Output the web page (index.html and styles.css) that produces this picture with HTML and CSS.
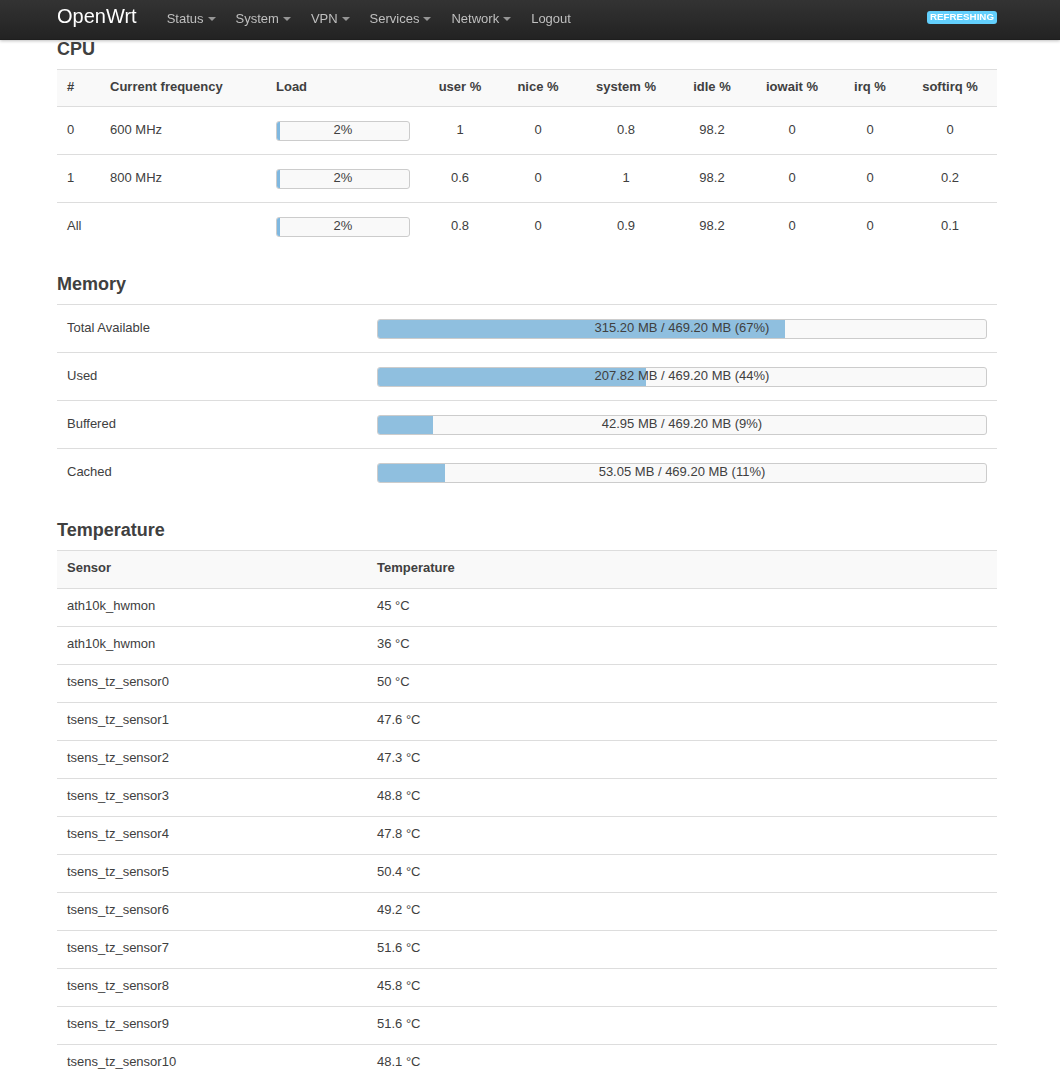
FILE: index.html
```html
<!DOCTYPE html>
<html lang="en">
<head>
<meta charset="utf-8">
<title>OpenWrt - Realtime Stats</title>
<link rel="stylesheet" href="styles.css">
</head>
<body>
<header class="topbar">
  <div class="topbar-inner">
    <a class="brand" href="#">OpenWrt</a>
    <ul class="nav">
      <li><a class="dropdown-toggle" href="#">Status</a></li>
      <li><a class="dropdown-toggle" href="#">System</a></li>
      <li><a class="dropdown-toggle" href="#">VPN</a></li>
      <li><a class="dropdown-toggle" href="#">Services</a></li>
      <li><a class="dropdown-toggle" href="#">Network</a></li>
      <li><a href="#">Logout</a></li>
    </ul>
    <span class="label notice">Refreshing</span>
  </div>
</header>

<main class="container">
  <section class="section first">
    <h3>CPU</h3>
    <table class="tbl cpu">
      <colgroup>
        <col class="c-num"><col class="c-freq"><col class="c-load"><col class="c-user"><col class="c-nice">
        <col class="c-sys"><col class="c-idle"><col class="c-iow"><col class="c-irq"><col class="c-soft">
      </colgroup>
      <thead>
        <tr><th>#</th><th>Current frequency</th><th>Load</th><th class="ctr">user %</th><th class="ctr">nice %</th><th class="ctr">system %</th><th class="ctr">idle %</th><th class="ctr">iowait %</th><th class="ctr">irq %</th><th class="ctr">softirq %</th></tr>
      </thead>
      <tbody>
        <tr><td>0</td><td>600 MHz</td><td class="barcell"><div class="pbar small"><div class="fill load" style="width:2%"></div><span class="ptext">2%</span></div></td><td class="ctr">1</td><td class="ctr">0</td><td class="ctr">0.8</td><td class="ctr">98.2</td><td class="ctr">0</td><td class="ctr">0</td><td class="ctr">0</td></tr>
        <tr><td>1</td><td>800 MHz</td><td class="barcell"><div class="pbar small"><div class="fill load" style="width:2%"></div><span class="ptext">2%</span></div></td><td class="ctr">0.6</td><td class="ctr">0</td><td class="ctr">1</td><td class="ctr">98.2</td><td class="ctr">0</td><td class="ctr">0</td><td class="ctr">0.2</td></tr>
        <tr><td>All</td><td></td><td class="barcell"><div class="pbar small"><div class="fill load" style="width:2%"></div><span class="ptext">2%</span></div></td><td class="ctr">0.8</td><td class="ctr">0</td><td class="ctr">0.9</td><td class="ctr">98.2</td><td class="ctr">0</td><td class="ctr">0</td><td class="ctr">0.1</td></tr>
      </tbody>
    </table>
  </section>

  <section class="section">
    <h3>Memory</h3>
    <table class="tbl mem">
      <colgroup><col class="c-label"><col class="c-value"></colgroup>
      <tbody>
        <tr><td>Total Available</td><td class="barcell"><div class="pbar"><div class="fill" style="width:67%"></div><span class="ptext">315.20 MB / 469.20 MB (67%)</span></div></td></tr>
        <tr><td>Used</td><td class="barcell"><div class="pbar"><div class="fill" style="width:44%"></div><span class="ptext">207.82 MB / 469.20 MB (44%)</span></div></td></tr>
        <tr><td>Buffered</td><td class="barcell"><div class="pbar"><div class="fill" style="width:9%"></div><span class="ptext">42.95 MB / 469.20 MB (9%)</span></div></td></tr>
        <tr><td>Cached</td><td class="barcell"><div class="pbar"><div class="fill" style="width:11%"></div><span class="ptext">53.05 MB / 469.20 MB (11%)</span></div></td></tr>
      </tbody>
    </table>
  </section>

  <section class="section">
    <h3>Temperature</h3>
    <table class="tbl temp">
      <colgroup><col class="c-label"><col class="c-value"></colgroup>
      <thead><tr><th>Sensor</th><th>Temperature</th></tr></thead>
      <tbody>
        <tr><td>ath10k_hwmon</td><td>45 °C</td></tr>
        <tr><td>ath10k_hwmon</td><td>36 °C</td></tr>
        <tr><td>tsens_tz_sensor0</td><td>50 °C</td></tr>
        <tr><td>tsens_tz_sensor1</td><td>47.6 °C</td></tr>
        <tr><td>tsens_tz_sensor2</td><td>47.3 °C</td></tr>
        <tr><td>tsens_tz_sensor3</td><td>48.8 °C</td></tr>
        <tr><td>tsens_tz_sensor4</td><td>47.8 °C</td></tr>
        <tr><td>tsens_tz_sensor5</td><td>50.4 °C</td></tr>
        <tr><td>tsens_tz_sensor6</td><td>49.2 °C</td></tr>
        <tr><td>tsens_tz_sensor7</td><td>51.6 °C</td></tr>
        <tr><td>tsens_tz_sensor8</td><td>45.8 °C</td></tr>
        <tr><td>tsens_tz_sensor9</td><td>51.6 °C</td></tr>
        <tr><td>tsens_tz_sensor10</td><td>48.1 °C</td></tr>
      </tbody>
    </table>
  </section>
</main>
</body>
</html>
```

FILE: styles.css
```css
html {
  overflow: hidden;
}
body {
  margin: 0;
  background: #fff;
  color: #404040;
  font-family: "Liberation Sans", Arial, Helvetica, sans-serif;
  font-size: 13px;
  line-height: 18px;
}

/* Top bar */
.topbar {
  position: fixed;
  top: 0;
  left: 0;
  right: 0;
  height: 40px;
  z-index: 10;
  background-color: #222;
  background-image: linear-gradient(to bottom, #333333, #222222);
  box-shadow: 0 1px 3px rgba(0, 0, 0, 0.25), inset 0 -1px 0 rgba(0, 0, 0, 0.1);
}
.topbar-inner {
  width: 940px;
  margin-left: 57px;
  height: 40px;
  display: flex;
  align-items: flex-start;
}
.brand {
  margin-left: -20px;
  padding: 6px 20px 14px;
  font-size: 20px;
  line-height: 20px;
  color: #fff;
  text-decoration: none;
}
.nav {
  list-style: none;
  margin: 0;
  padding: 0;
  display: flex;
  flex: 1;
}
.nav a {
  display: block;
  padding: 9px 10px 12px;
  line-height: 19px;
  color: #bfbfbf;
  text-decoration: none;
}
.dropdown-toggle::after {
  content: "";
  display: inline-block;
  vertical-align: top;
  margin-top: 8px;
  margin-left: 4px;
  width: 0;
  height: 0;
  border-left: 4px solid transparent;
  border-right: 4px solid transparent;
  border-top: 4px solid #fff;
  opacity: 0.5;
}
.label {
  margin-top: 11px;
  padding: 1px 3px 2px;
  font-size: 9.75px;
  line-height: 10px;
  font-weight: bold;
  color: #fff;
  text-transform: uppercase;
  white-space: nowrap;
  border-radius: 3px;
}
.label.notice {
  background-color: #62cffc;
}

/* Content */
.container {
  width: 940px;
  margin-left: 57px;
  padding-top: 37px;
}
.section h3 {
  margin: 22px 0 8px;
  font-size: 18px;
  line-height: 24px;
  font-weight: bold;
  color: #404040;
}
.section.first h3 {
  margin-top: 0;
}

.tbl {
  width: 940px;
  border-collapse: collapse;
  table-layout: fixed;
}
.tbl th,
.tbl td {
  text-align: left;
  vertical-align: middle;
  border-top: 1px solid #ddd;
  padding: 12px 10px 14px;
  line-height: 21px;
}
.tbl td.barcell {
  padding: 13px 10px;
}
.tbl th {
  font-weight: bold;
  background: #f9f9f9;
  padding: 6px 10px 9px;
}
.tbl .ctr {
  text-align: center;
}
.tbl.temp th {
  padding: 6px 10px 10px;
}
.tbl.temp td {
  padding: 6px 10px 10px;
}

/* CPU column widths */
.c-num { width: 43px; }
.c-freq { width: 166px; }
.c-load { width: 153px; }
.c-user { width: 82px; }
.c-nice { width: 74px; }
.c-sys { width: 102px; }
.c-idle { width: 70px; }
.c-iow { width: 90px; }
.c-irq { width: 66px; }
.c-soft { width: 94px; }

.c-label { width: 310px; }
.c-value { width: 630px; }

/* Progress bars */
.pbar {
  position: relative;
  height: 18px;
  border: 1px solid #ccc;
  border-radius: 3px;
  background: #f9f9f9;
  overflow: hidden;
  vertical-align: middle;
}
.pbar.small {
  width: 132px;
}
.fill {
  height: 100%;
  background: #8fbfdf;
}
.fill.load {
  background: #7fb8e0;
}
.ptext {
  position: absolute;
  top: 0;
  left: 0;
  right: 0;
  text-align: center;
  line-height: 16px;
  color: #404040;
  white-space: nowrap;
}
```
